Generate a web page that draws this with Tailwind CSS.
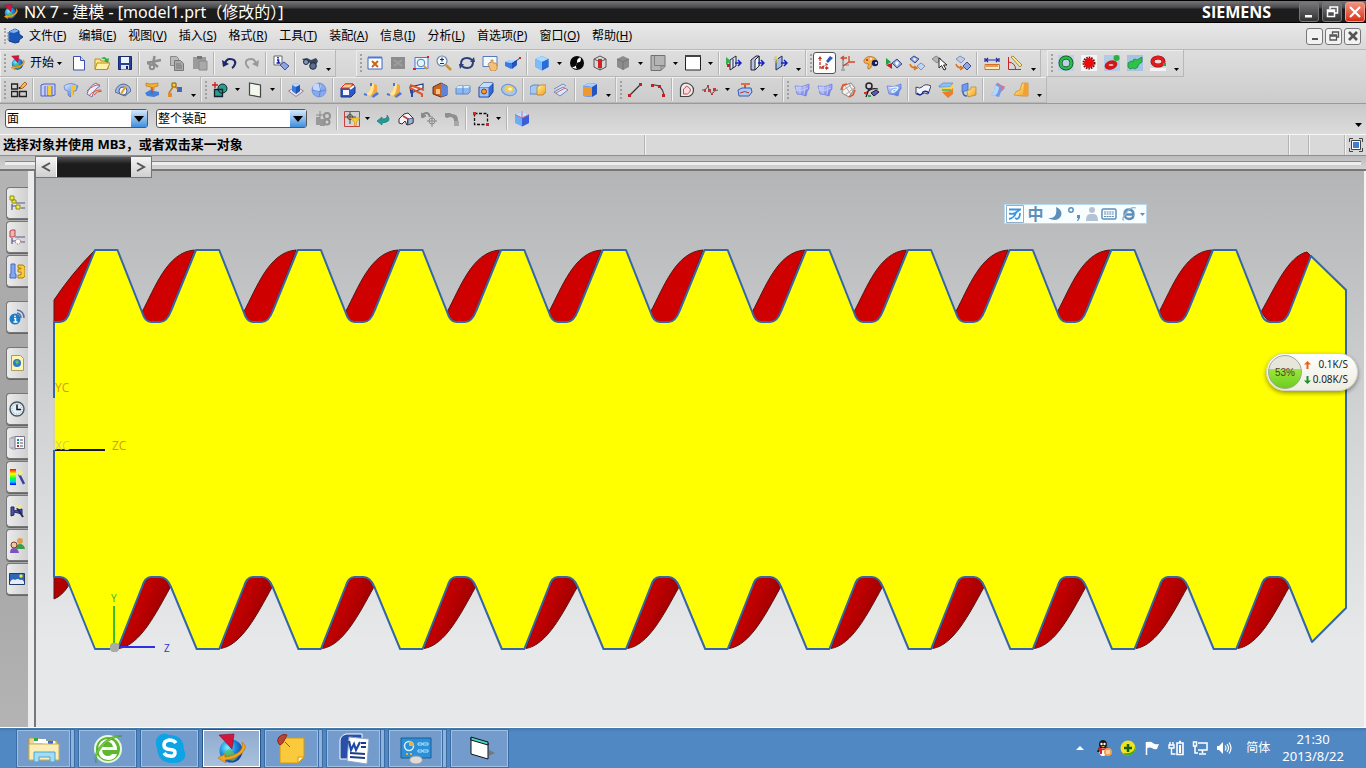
<!DOCTYPE html>
<html lang="zh-CN">
<head>
    <meta charset="UTF-8">
    <meta name="viewport" content="width=device-width, initial-scale=1.0">
    <title>NX 7 - 建模 - [model1.prt]</title>

    <!-- Tailwind CSS CDN -->
    <script src="https://cdn.jsdelivr.net/npm/@tailwindcss/browser@4"></script>
</head>
<body class="h-screen overflow-hidden flex flex-col bg-[#d8d8d8] text-black text-[12px] leading-4 font-['Noto_Sans','Noto_Sans_CJK_SC',sans-serif]">

    <!-- Shared gradients -->
    <svg class="absolute w-0 h-0" aria-hidden="true">
        <defs>
            <linearGradient id="blue" x1="0" y1="0" x2="1" y2="1"><stop offset="0" stop-color="#e4f0ff"/><stop offset="1" stop-color="#2c6ad8"/></linearGradient>
            <linearGradient id="gold" x1="0" y1="0" x2="1" y2="1"><stop offset="0" stop-color="#fff2a0"/><stop offset="1" stop-color="#f39a1c"/></linearGradient>
            <linearGradient id="violet" x1="0" y1="0" x2="1" y2="1"><stop offset="0" stop-color="#f0f2ff"/><stop offset="1" stop-color="#5464dc"/></linearGradient>
            <linearGradient id="rainbow" x1="0" y1="0" x2="0" y2="1"><stop offset="0" stop-color="#f00"/><stop offset=".3" stop-color="#ff0"/><stop offset=".6" stop-color="#0f4"/><stop offset=".8" stop-color="#0cf"/><stop offset="1" stop-color="#00f"/></linearGradient>
            <radialGradient id="globe" cx=".35" cy=".35" r=".7"><stop offset="0" stop-color="#7df0ff"/><stop offset=".5" stop-color="#1c8fe0"/><stop offset="1" stop-color="#123a9c"/></radialGradient>
            <symbol id="nx" viewBox="0 0 32 32">
                <circle cx="15" cy="18" r="11.500" fill="url(#globe)"/>
                <path d="M8 20q5-6 9-1t6 1q-1 6-6 8-6-1-9-8z" fill="#5ec54a" opacity=".7"/>
                <path d="M26 9q6 4 1 10-6 7-18 8l1 3-8-5 7-4 0 3q10-1 15-6 4-5 2-9z" fill="#f3a51e" stroke="#b86c08" stroke-width=".6"/>
                <path d="M3 2l15-1-2 15z" fill="#d3163c" stroke="#8c0a24" stroke-width=".6"/>
            </symbol>
        </defs>
    </svg>

    <!-- Title bar -->
    <header class="h-[23px] shrink-0 flex items-center pl-[3px] border-t border-b border-black bg-linear-to-b from-[#77777b] from-0% via-[#4a4a4c] via-30% to-[#1c1c1c] to-40% text-white">
        <svg class="w-4 h-4"><use href="#nx"/></svg>
        <h1 class="ml-[5px] text-[16px] leading-5 whitespace-pre">NX 7 - 建模 - [model1.prt（修改的）]</h1>
        <span class="ml-auto mr-7 text-[16px] font-bold font-['Open_Sans','Noto_Sans',sans-serif]">SIEMENS</span>
        <div class="flex gap-[3px] pr-[1px]">
            <button aria-label="最小化" class="w-5 h-5 grid place-items-center rounded-[3px] border border-[#777] bg-linear-to-b from-[#77777a] to-[#333]"><svg viewBox="0 0 16 16" class="w-4 h-4"><path d="M4 11h7v2.500H4z" fill="#fff"/></svg></button>
            <button aria-label="还原" class="w-5 h-5 grid place-items-center rounded-[3px] border border-[#777] bg-linear-to-b from-[#77777a] to-[#333]"><svg viewBox="0 0 16 16" class="w-4 h-4"><path d="M6 5V3h7.500v6H11M3.500 6h7v6.500h-7zM3.500 7.500h7" fill="none" stroke="#fff" stroke-width="1.500"/></svg></button>
            <button aria-label="关闭" class="w-5 h-5 grid place-items-center rounded-[3px] border border-[#f0a090] bg-linear-to-b from-[#f0907c] to-[#d8280c]"><svg viewBox="0 0 16 16" class="w-4 h-4"><path d="M3 3l10 10M13 3L3 13" stroke="#fff" stroke-width="2.200"/></svg></button>
        </div>
    </header>

    <!-- Menu bar -->
    <nav class="h-[27px] shrink-0 flex items-center border-b border-[#b9b9b9] bg-linear-to-b from-[#e8e8e8] to-[#d9d9d9]">
        <span class="ml-1 mr-px h-4 border-l-2 border-dotted border-[#a8a8a8]"></span>
        <svg class="w-4 h-4" viewBox="0 0 16 16"><path d="M2 4l6-3 4 2v3l4 3-4 3v2l-4 1-6-2z" fill="#1c56b8" stroke="#123c84"/><path d="M2 4l6-3 4 2-5 2z" fill="#7cb4f4"/><path d="M0 5h3M0 8h3M0 11h3" stroke="#5b8ad0"/></svg>
        <div id="menu" class="flex gap-3 ml-[6px]"></div>
        <div class="ml-auto flex gap-[2px] pr-[5px]">
            <button aria-label="最小化窗口" class="w-[17px] h-[17px] grid place-items-center rounded-[3px] border border-[#777] bg-[#f2f2f2]"><svg viewBox="0 0 12 12" class="w-3 h-3"><path d="M3 8h6v2H3z" fill="#555"/></svg></button>
            <button aria-label="还原窗口" class="w-[17px] h-[17px] grid place-items-center rounded-[3px] border border-[#777] bg-[#f2f2f2]"><svg viewBox="0 0 12 12" class="w-3 h-3"><path d="M4.500 4V2h6v5H9M2 5h6.500v5H2zM2 6h6" fill="none" stroke="#555" stroke-width="1.300"/></svg></button>
            <button aria-label="关闭窗口" class="w-[17px] h-[17px] grid place-items-center rounded-[3px] border border-[#777] bg-[#f2f2f2]"><svg viewBox="0 0 12 12" class="w-3 h-3"><path d="M2 2l8 8M10 2l-8 8" stroke="#555" stroke-width="2.600"/></svg></button>
        </div>
    </nav>

    <!-- Toolbars, filled in by the script -->
    <div id="toolbars" class="shrink-0 bg-linear-to-b from-[#dedede] to-[#cccccc] border-b border-[#999]"></div>

    <!-- Selection bar -->
    <div class="h-[30px] shrink-0 flex items-center pl-[5px] pr-1 pb-px bg-linear-to-b from-[#c9c9c9] to-[#dcdcdc]">
        <div class="relative w-[143px]">
            <select aria-label="类型过滤器" class="appearance-none block w-full h-[19px] pl-px rounded-[3px] border border-[#555] bg-white text-[12px] leading-4"><option>面</option></select>
            <span class="pointer-events-none absolute inset-y-px right-px w-4 grid place-items-center bg-linear-to-b from-[#d4e8fb] to-[#3f8fdc]"><svg class="w-3 h-2" viewBox="0 0 12 8"><path d="M1 1h10L6 7z"/></svg></span>
        </div>
        <div class="relative w-[151px] ml-2">
            <select aria-label="选择范围" class="appearance-none block w-full h-[19px] pl-px rounded-[3px] border border-[#555] bg-white text-[12px] leading-4"><option>整个装配</option></select>
            <span class="pointer-events-none absolute inset-y-px right-px w-4 grid place-items-center bg-linear-to-b from-[#d4e8fb] to-[#3f8fdc]"><svg class="w-3 h-2" viewBox="0 0 12 8"><path d="M1 1h10L6 7z"/></svg></span>
        </div>
        <div id="selection-tools" class="flex items-center ml-1"></div>
        <button aria-label="选项" class="ml-auto mt-3"><svg class="w-[7px] h-1" viewBox="0 0 7 4"><path d="M0 0h7L3.500 4z"/></svg></button>
    </div>

    <!-- Prompt line -->
    <div class="h-[22px] shrink-0 flex border-t border-b border-t-[#f6f6f6] border-b-[#8f8f8f] bg-[#d9d9d9]">
        <p class="flex-1 pl-[3px] text-[13px] font-bold leading-[19px] whitespace-nowrap">选择对象并使用 MB3，或者双击某一对象</p>
        <span class="w-[644px] border-l border-[#b5b5b5] shadow-[inset_1px_0_#f2f2f2]"></span>
        <span class="w-5 border-l border-[#b5b5b5] shadow-[inset_1px_0_#f2f2f2]"></span>
        <span class="w-9 border-l border-[#b5b5b5] shadow-[inset_1px_0_#f2f2f2]"></span>
        <button aria-label="全屏" class="w-[22px] grid place-items-center border-l border-[#b5b5b5] shadow-[inset_1px_0_#f2f2f2]"><svg class="w-[14px] h-[14px]" viewBox="0 0 14 14"><path d="M.5 4V.5H4M10 .5h3.500V4M.5 10v3.500H4M10 13.500h3.500V10" fill="none" stroke="#444"/><path d="M2.500 2.500h9v9h-9z" fill="#fff" stroke="#444"/><path d="M4 4h6v6H4z" fill="#3d7fd0"/></svg></button>
    </div>

    <!-- Dock track with the small scroller hanging over the canvas -->
    <div class="relative h-[15px] shrink-0 py-[5px] px-[5px] bg-linear-to-b from-[#bcbcbc] to-[#d4d4d4] border-b-2 border-[#777]">
        <div class="h-1 border-t border-[#888] bg-[#ededed]"></div>
        <div class="absolute z-10 left-[35px] top-0 w-[117px] h-[22px] flex border border-[#777] bg-[#1c1c1c]">
            <button aria-label="向左" class="w-[21px] grid place-items-center bg-linear-to-b from-[#f4f4f4] to-[#cfcfcf] border-r border-white"><svg class="w-3 h-3" viewBox="0 0 12 12"><path d="M10 2L3 6l7 4" fill="none" stroke="#555" stroke-width="2"/></svg></button>
            <span class="flex-1 bg-linear-to-b from-[#55565a] to-[#1c1c1c] to-35%"></span>
            <button aria-label="向右" class="w-5 grid place-items-center bg-linear-to-b from-[#f4f4f4] to-[#cfcfcf]"><svg class="w-3 h-3" viewBox="0 0 12 12"><path d="M2 2l7 4-7 4" fill="none" stroke="#555" stroke-width="2"/></svg></button>
        </div>
    </div>

    <main class="flex-1 min-h-0 flex">
        <!-- Resource bar -->
        <aside id="resources" class="w-7 shrink-0 flex flex-col items-end gap-[2px] pt-4 bg-linear-to-b from-[#b4b4b4] via-[#9f9f9f] to-[#b4b4b4]"></aside>
        <div class="w-2 shrink-0 bg-[#ececec] border-r-2 border-[#777]"></div>

        <!-- Graphics window -->
        <section class="relative flex-1 min-w-0 border-r-2 border-[#f4f4f4] bg-linear-to-b from-[#b4b5b6] from-0% via-[#d2d3d5] via-45% to-[#e6e8ea] to-85%">
            <svg class="block w-full h-full" viewBox="36 171 1328 556" preserveAspectRatio="xMinYMin meet">
                <defs>
                    <linearGradient id="shade" x1="0" y1="0" x2="1" y2=".6"><stop offset="0" stop-color="#8c0000"/><stop offset=".45" stop-color="#c40000"/><stop offset="1" stop-color="#900000"/></linearGradient>
                    <path id="groove-top" d="M142 312C155 288 167 252 194.500 250L171 310Q167 322 160 322H150Q144 320 142 312z" fill="#cf0000" stroke="#5a1414" stroke-width="1"/>
                    <path id="groove-bottom" d="M119 648.500C140 645 155 615 170.500 587Q167 577 161 577H150Q144 580 142 587z" fill="url(#shade)" stroke="#5a1414" stroke-width="1"/>
                </defs>
                <path d="M54 322V300Q72 273 94 251L70 310Q66 322 60 322z" fill="#cf0000" stroke="#5a1414"/>
                <path d="M54 577h8q5 2 7 8-7 11-15 14z" fill="#b00000" stroke="#5a1414"/>
                <g id="grooves"></g>
                <path d="M1261 312C1275 288 1288 256 1307 252L1311 256L1290 310Q1286 322 1279 322H1269z" fill="#cf0000" stroke="#5a1414"/>
                <path id="thread" fill="#ffff00" stroke="#3566a8" stroke-width="2" stroke-linejoin="round"/>
                <path d="M54 398v52" stroke="#d8d49a" stroke-width="2"/>
                <path d="M55 450h50" stroke="#15153c" stroke-width="2"/>
                <g font-family="Open Sans, sans-serif" font-size="12">
                    <text x="55" y="392" fill="#cf9a20">YC</text>
                    <text x="55" y="450" fill="#d2cc70">XC</text>
                    <text x="112" y="450" fill="#cf9a20">ZC</text>
                    <text x="111" y="602" font-size="10" fill="#2db52d">Y</text>
                    <text x="164" y="652" font-size="10" fill="#3a2fd0">Z</text>
                </g>
                <path d="M114 606v38" stroke="#38c01c" stroke-width="2"/>
                <path d="M118 647h37" stroke="#3030e0" stroke-width="2"/>
                <path d="M112 643h5l2 2v5l-2 2h-5l-2-2v-5z" fill="#ababab"/>
            </svg>

            <!-- Input method bar -->
            <div class="absolute top-[33px] right-[217px] h-5 w-[143px] flex items-center justify-between px-px bg-[#f8fdff] border border-[#b8d8ee] text-[#5f8fb8]">
                <svg class="w-[18px] h-[18px]" viewBox="0 0 18 18"><path d="M.5.500h17v17H.5z" fill="#fff" stroke="#8fb0cc"/><path d="M3 4.500h12M3 8.500q5 1 7-1l4-3M3 14q5-1 7-6M14 8q0 5-3 6l-2-1" fill="none" stroke="#3d96e0" stroke-width="1.800"/></svg>
                <span class="w-4 text-center text-[16px] leading-4 font-bold">中</span>
                <svg class="w-4 h-4" viewBox="0 0 16 16"><path d="M9 1q7 3 5 9-4 7-13 2 10 1 8-11z" fill="currentColor"/></svg>
                <svg class="w-4 h-4" viewBox="0 0 16 16"><circle cx="5" cy="4" r="2.200" fill="none" stroke="currentColor" stroke-width="1.500"/><path d="M11 9h3v3l-2 3h-1l1-3h-1z" fill="currentColor"/></svg>
                <svg class="w-3 h-4" viewBox="0 0 12 16"><circle cx="6" cy="4" r="3" fill="#b4c3d4"/><path d="M0 15q0-7 4-7h4q4 0 4 7z" fill="#b4c3d4"/></svg>
                <svg class="w-4 h-4" viewBox="0 0 16 16"><rect x="1" y="3" width="14" height="10" rx="1.500" fill="none" stroke="currentColor" stroke-width="1.500"/><path d="M3 6h10M3 8h10M3 10.500h10" stroke="currentColor" stroke-dasharray="2 .6"/></svg>
                <svg class="w-4 h-4" viewBox="0 0 16 16"><path d="M12.500 10q-1 3-4.500 3-4.500-.5-4.500-5T8 3.500q4.500.5 4.500 5H5" fill="none" stroke="currentColor" stroke-width="2.400"/><path d="M3 14Q0 14 5 7t10-5" fill="none" stroke="#8fb4d4" stroke-width="1.300"/></svg>
                <svg class="w-[5px] h-[3px]" viewBox="0 0 5 3"><path d="M0 0h5L2.500 3z" fill="currentColor"/></svg>
            </div>

            <!-- Network speed bubble -->
            <div class="absolute top-[182px] right-[6px] w-[92px] h-[38px] flex items-center gap-[2px] pl-px pr-[9px] rounded-full bg-linear-to-b from-white to-[#ededdf] border border-[#d2d2c4] shadow-[0_2px_4px_#0006] text-[10px] leading-[15px] text-[#222]">
                <div class="w-[34px] h-[34px] shrink-0 grid place-items-center rounded-full border border-[#a0a890] bg-linear-to-b from-[#e6e6da] from-40% via-[#9be83c] via-41% to-[#6ccc1c] text-[#5a3a1a] font-['Liberation_Sans']">53%</div>
                <div class="flex-1 whitespace-nowrap">
                    <div class="flex items-center justify-between"><svg class="w-[7px] h-2" viewBox="0 0 7 8"><path d="M3.500 0L7 3.500H4.500V8h-2V3.500H0z" fill="#e8641c"/></svg>0.1K/S</div>
                    <div class="flex items-center justify-between"><svg class="w-[7px] h-2" viewBox="0 0 7 8"><path d="M3.500 8L7 4.500H4.500V0h-2v4.500H0z" fill="#1f8f2f"/></svg>0.08K/S</div>
                </div>
            </div>
        </section>
    </main>

    <!-- Taskbar -->
    <footer class="h-[41px] shrink-0 flex items-stretch border-t border-white bg-linear-to-b from-[#4478ae] to-[#5088c4] to-10% text-white">
        <div id="tasks" class="flex gap-[3px] pl-4"></div>
        <div class="ml-auto flex items-center gap-2 pr-[22px]">
            <svg class="w-4 h-4" viewBox="0 0 16 16"><path d="M4 10h8L8 6z" fill="#fff"/></svg>
            <svg class="w-4 h-4" viewBox="0 0 16 16"><ellipse cx="7" cy="4.500" rx="4" ry="4.500" fill="#181818"/><path d="M3 7q4 3 8 0l3 5H1z" fill="#181818"/><ellipse cx="7" cy="12" rx="3.500" ry="4" fill="#fff"/><path d="M3 7q4 3 8 0v2q-4 2-5 1v4H4v-4H2z" fill="#e02020"/><circle cx="5.500" cy="4" r="1.200" fill="#fff"/><circle cx="8.500" cy="4" r="1.200" fill="#fff"/><path d="M5 6h4l-2 1.500z" fill="#f5a81c"/><circle cx="12" cy="12" r="4" fill="#f0a04c"/><path d="M10 11h4M10 13h4" stroke="#fff"/></svg>
            <svg class="w-4 h-4" viewBox="0 0 16 16"><circle cx="8" cy="8" r="7.500" fill="#f2e31c"/><path d="M3 13Q16 15 15 4q2 9-5 11.500Q5 16 3 13z" fill="#3fa72c"/><path d="M8 4v8M4 8h8" stroke="#146014" stroke-width="2.500"/></svg>
            <svg class="w-4 h-4" viewBox="0 0 16 16"><path d="M2.500 2v13" stroke="#fff" stroke-width="1.500"/><path d="M3 2q4-1 6 1 2 2 6 1l-2 5q-3 1-5-1-2-1-5 0z" fill="#fff"/></svg>
            <svg class="w-4 h-4" viewBox="0 0 16 16"><path d="M2 2v3M5 2v3M1 5h5v3H1zM3.500 8v6h4" fill="none" stroke="#fff" stroke-width="1.400"/><path d="M9 3h6v11.500H9zM11 1.500h2" fill="none" stroke="#fff" stroke-width="1.600"/><path d="M11 5h2v8h-2z" fill="#fff"/></svg>
            <svg class="w-4 h-4" viewBox="0 0 16 16"><path d="M6 3h9v7H6M10.500 10v3M7 14h7M1.500 2h3v4h-3zM3 6v7h3" fill="none" stroke="#fff" stroke-width="1.500"/></svg>
            <svg class="w-4 h-4" viewBox="0 0 16 16"><path d="M1 6h2l4-4v12l-4-4H1z" fill="#fff"/><path d="M9 5.500q2 2.500 0 5M11 4q3 4 0 8M13 2.500q4 5.500 0 11" fill="none" stroke="#fff" stroke-width="1.200"/></svg>
            <span class="ml-[6px] w-6">简体</span>
            <div class="ml-1 text-center text-[13px] leading-[17px]"><div>21:30</div><div>2013/8/22</div></div>
        </div>
    </footer>

    <script>
        // --- Icon artwork, all on a 16 x 16 grid ---
        const icons = {
            new: `<path d="M2.500 1.500h7l4 4v9.500h-11z" fill="#fff" stroke="#3a4fb0"/><path d="M9.500 1.500v4h4" fill="#cfdcff" stroke="#3a4fb0"/>`,
            open: `<path d="M1 4h5l1 2h7v8H1z" fill="#ffe680" stroke="#b8901c"/><path d="M3 8h13l-3 6.500H1z" fill="#fff2a8" stroke="#b8901c"/><path d="M7 4q3-4 6 0l2-1-1 5-4-2 1.500-1Q10 3 7 4z" fill="#2fae3f"/>`,
            save: `<path d="M1.500 1.500h13v13h-13z" fill="#2a3f98" stroke="#182868"/><path d="M4 2h8v6H4z" fill="#e8f4ff"/><path d="M4 10h8v4.500H4z" fill="#dfe6f0"/><path d="M9 11h2v3H9z" fill="#182868"/>`,
            cut: `<path d="M8.500 1L7 9M1 8l14-3M7 8l5 4" fill="none" stroke="#8d8d8d" stroke-width="2.500"/><circle cx="6" cy="12" r="2.200" fill="none" stroke="#8d8d8d" stroke-width="2"/><circle cx="3" cy="8" r="2" fill="#8d8d8d"/>`,
            copy: `<path d="M1.500 1.500h6l2 2v7h-8z" fill="#bbb" stroke="#888"/><path d="M5.500 5.500h6l3 3v7h-9z" fill="#aaa" stroke="#777"/><path d="M7 9h5M7 11h6M7 13h6" stroke="#777"/>`,
            paste: `<path d="M1 2h13v12H1z" fill="#9b9b9b"/><path d="M5 1h5v3H5z" fill="#777"/><path d="M7 6h8v9H7z" fill="#a9a9a9" stroke="#8a8a8a"/>`,
            undo: `<path d="M4 9Q5 4 9 4q6 0 5 5-1 3-3 4" fill="none" stroke="#1c2868" stroke-width="2.200"/><path d="M1 5l1 7 6-3z" fill="#1c2868"/>`,
            redo: `<path d="M12 9Q11 4 7 4 1 4 2 9q1 3 3 4" fill="none" stroke="#999" stroke-width="2"/><path d="M15 5l-1 7-6-3z" fill="#999"/>`,
            info: `<path d="M1 1h8v9H1z" fill="#fff" stroke="#666"/><path d="M5 2v1.500M4 5h1.500v3M3.500 8h4" stroke="#1020a0" stroke-width="1.600" fill="none"/><path d="M7 10l4-3 5 4-4 4z" fill="#8ea4dc" stroke="#3c50a0"/>`,
            find: `<path d="M0 4l5-1 4 2 5-2 2 3-2 4-4 2-3-5-3 1z" fill="#39465c"/><circle cx="11" cy="11" r="3.300" fill="#5b6f90" stroke="#1c2840"/><circle cx="4" cy="7" r="2.500" fill="#8496b4" stroke="#1c2840"/>`,
            fit: `<path d="M1 2.500h14v11.500H1z" fill="#fff" stroke="#3a66c0"/><path d="M1 1.500h14v2H1z" fill="#4a7ad8"/><path d="M5 6l6 6M11 6l-6 6" stroke="#d0601c" stroke-width="2"/>`,
            fitGray: `<path d="M1 2h14v12H1z" fill="#8c8c8c"/><path d="M4 5l8 6M12 5l-8 6" stroke="#9d9d9d" stroke-width="2"/>`,
            zoomBox: `<path d="M2 2.500h13v11H2z" fill="#e8f4ff" stroke="#4a7ad8"/><circle cx="8" cy="8" r="3.800" fill="#dff6ff" stroke="#5878a8"/><path d="M11 11l3 3" stroke="#d89a30" stroke-width="2"/><path d="M14 1h2v2h-2zM0 13h3v2H0z" fill="#e02020"/>`,
            zoom: `<circle cx="6" cy="6" r="5" fill="#f0faff" stroke="#7088a8" stroke-width="1.200"/><path d="M6 2.500v4M4 4.500h4M4 8.500h4" stroke="#1c2c8c" stroke-width="1.200"/><path d="M10 10l5 5" stroke="#c8923c" stroke-width="2.500"/>`,
            rotate: `<path d="M2 9q0-6 6-6 3 0 5 2M14 7q0 6-6 6-3 0-5-2" fill="none" stroke="#2c3f78" stroke-width="2"/><path d="M11 7h5l-1-5zM0 9h5l-4 5z" fill="#2c3f78"/>`,
            pan: `<path d="M1 1.500h14v10H1z" fill="#f4f8ff" stroke="#5878b8"/><path d="M6 9l2-2 1 1V5h2v3h3l1 3v3l-2 2h-4z" fill="#f3c078" stroke="#b87c30" stroke-width=".7"/>`,
            persp: `<path d="M0 7l5-2h7l-1 6-5 3-6-3z" fill="#3c7ce0"/><path d="M0 7l5-2h7L7 8z" fill="#a8d4ff"/><path d="M7 8l5-3v5l-5 4z" fill="#2458c0"/><path d="M7 9l8-6" stroke="#283c70"/><path d="M14 2h2v2h-2z" fill="#d02020"/>`,
            cube: `<path d="M8 1l6.500 3v8L8 15.500 1.500 12V4z" fill="#3f8ae8"/><path d="M8 1l6.500 3L8 7 1.500 4z" fill="#a8dcff"/><path d="M8 7l6.500-3v8L8 15.500z" fill="#2c6ad8"/><path d="M1.500 4L8 7v8.500L1.500 12z" fill="#7cbcf8"/>`,
            yin: `<circle cx="8" cy="8" r="7" fill="#080808"/><path d="M8 1q6 1 3 6-4 0-4 4 0 4 4 3Q5 14 3 12q5 0 5-5 0-4 3-4-1-2-3-2z" fill="#fff"/>`,
            section: `<path d="M8 1l6 3v8l-6 3-6-3V4zM2 4l6 3 6-3M8 7v8" fill="#d8d8d8" stroke="#555"/><path d="M6 4h4v9H6z" fill="#d42020"/>`,
            sectionGray: `<path d="M8 1l6 3v8l-6 3-6-3V4z" fill="#8c8c8c"/><path d="M2 4l6 3 6-3M8 7v8" fill="none" stroke="#757575"/>`,
            layer: `<path d="M1 .5h14v11l-4 4H1z" fill="#b4b4b4" stroke="#707070"/><path d="M4.500 1v9.500H15M11 15v-4h4" fill="none" stroke="#808080"/>`,
            white: `<path d="M.5 1h15v14H.5z" fill="#fff" stroke="#222"/><path d="M0 0h16v2H0z" fill="#444"/>`,
            wcs1: `<path d="M4 5l6-4v10l-6 4z" fill="#dfe8fc" stroke="#223"/><path d="M7 4v9" stroke="#223"/><path d="M9 8h6M12 5l3 3-3 3" stroke="#1420c8" stroke-width="1.500" fill="none"/><path d="M0 2l5 4-5 4z" fill="#2fb04a"/><path d="M1 9h3v3H1z" fill="#c82020"/>`,
            wcs2: `<path d="M2 5l5-4h3v10l-4 4H2z" fill="#b8c4dc" stroke="#223"/><path d="M6 5l4-4v10l-4 4z" fill="#eef3ff" stroke="#223"/><path d="M9 8h6M12 5l3 3-3 3" stroke="#1420c8" stroke-width="1.500" fill="none"/>`,
            wcs3: `<path d="M4 5l6-4v10l-6 4z" fill="#a8bce4" stroke="#1c2c58"/><path d="M9 8h6M12 5l3 3-3 3" stroke="#1420c8" stroke-width="1.500" fill="none"/><path d="M4 1v7M1 4.500h7M2 2l5 5M7 2L2 7" stroke="#e8c81c"/>`,
            csys: `<path d="M3 3v10l6-3M4 13h6" fill="none" stroke="#c03020" stroke-width="1.300" stroke-dasharray="3 1"/><path d="M1 4h4L3 1zM9 11v4l3-2zM8 8l3 1-1 2z" fill="#c03020"/><path d="M9 6l4-5 3 2-5 5z" fill="#2c58b8"/>`,
            csys2: `<path d="M3 5v9M3 10h6M1 15h4" fill="none" stroke="#999" stroke-width="1.600"/><path d="M9 1v6h6M9 7l-6 4M1 3h6M4 1l-3 2 3 2" fill="none" stroke="#d04828" stroke-width="1.300"/>`,
            palette: `<path d="M1 5q3-5 9-3 5 2 3 5-2 1-4 1 0 6-4 6-1-2 1-5-6 0-5-4z" fill="#f3b04c" stroke="#a86c18" stroke-width=".7"/><circle cx="4" cy="5" r="1" fill="#c02020"/><circle cx="8" cy="4" r="1" fill="#fff"/><circle cx="12" cy="8" r="3.200" fill="#182060"/><circle cx="13" cy="8" r="1" fill="#fff"/>`,
            arrowDia: `<path d="M0 3l5 4-5 3z" fill="#1fa040"/><path d="M0 10l6-2v6z" fill="#c82020"/><path d="M6 8l5-4 5 5-5 4z" fill="#90a8e4" stroke="#3c4c90"/><path d="M9 8l2-2 2 2-2 3z" fill="#fff"/>`,
            diamonds: `<path d="M1 4l4-3 5 3-4 4z" fill="#90a8e4" stroke="#3c4c90"/><path d="M4 4l1-1 2 1-1 2z" fill="#fff"/><path d="M8 11l4-3 4 3-4 4z" fill="#c4d4f4" stroke="#8090b8"/><path d="M1 9q1 4 6 4M5 11l3 2-3 2" fill="none" stroke="#d8741c" stroke-width="1.500"/>`,
            pick: `<path d="M0 4l4-3 5 3-4 4z" fill="#b4b4b4" stroke="#888"/><path d="M7 3v10l2.500-2.500L12 15l2-1-2.500-4H15z" fill="#fff" stroke="#222"/>`,
            diamonds2: `<path d="M1 4l4-3 5 3-4 4z" fill="#c0ccec" stroke="#8090b8"/><path d="M8 11l4-4 4 4-4 4z" fill="#90a8e4" stroke="#3c4c90"/><path d="M1 9q1 4 6 4M5 11l3 2-3 2" fill="none" stroke="#d8741c" stroke-width="1.500"/>`,
            ruler: `<path d="M1 3v4M15 3v4M2 5h12M4 3L2 5l2 2M12 3l2 2-2 2" fill="none" stroke="#1c2c9c" stroke-width="1.200"/><path d="M1 9.500h14.500v5H1z" fill="#fff0b0" stroke="#d07020"/><path d="M3 10v2M5 10v2M7 10v2M9 10v2M11 10v2M13 10v2" stroke="#d04020"/>`,
            angle: `<path d="M1.500 2v12.500H14M1.500 7q7 1 7 7" fill="none" stroke="#c02828"/><path d="M4 2l2-1 9 9-2 2z" fill="#f8e89c" stroke="#a88c28"/>`,
            gear1: `<path d="M0 0h16v16H0z" fill="#bcd0ea"/><circle cx="8" cy="8" r="5.500" fill="none" stroke="#123c1c" stroke-width="4"/><circle cx="8" cy="8" r="5.500" fill="none" stroke="#26c048" stroke-width="2.600"/>`,
            gear2: `<path d="M0 0h16v16H0z" fill="#f4f4f4"/><circle cx="8" cy="8" r="5.500" fill="none" stroke="#5c1010" stroke-width="2" stroke-dasharray="1.500 1"/><circle cx="8" cy="8" r="5" fill="#e80c0c"/>`,
            gear3: `<path d="M0 0h16v16H0z" fill="#b4cbe8"/><ellipse cx="7" cy="10" rx="6.500" ry="4.500" fill="#d01818" transform="rotate(-20 7 10)"/><ellipse cx="7" cy="10" rx="2.500" ry="1" fill="#f4b4b4"/><circle cx="12.500" cy="3" r="3" fill="#28b040"/>`,
            gear4: `<path d="M0 0h16v16H0z" fill="#a4c4e4"/><path d="M1 8l3-2 2 1V5l2-1 2 1 5-3v5l-4 3v2l-3 2-2-1-3 1-2-2z" fill="#2cc448" stroke="#1c7c30" stroke-width=".7"/>`,
            gear5: `<path d="M0 13h16v3H0z" fill="#f4f4f4"/><ellipse cx="8" cy="6.500" rx="5.500" ry="4" fill="#f4d8d8" stroke="#7c1010" stroke-width="4"/><ellipse cx="8" cy="6.500" rx="5.500" ry="4" fill="none" stroke="#e41c1c" stroke-width="3"/><path d="M13 8h3v3h-3z" fill="#2ca840"/>`,
            sketch: `<path d="M.5 2h6v5h-6zM.5 9.500h6v5h-6zM8.500 9.500h7v5h-7zM8.500 7V5" fill="none" stroke="#222" stroke-width="1.400"/><path d="M9 7l1-3 4-4 2 2-4 4z" fill="#f4c42c" stroke="#8c3010" stroke-width=".7"/>`,
            extrude: `<path d="M1 3l3-1h11v11l-3 1H1z" fill="#c4ccfa" stroke="#5060c0"/><path d="M5 4v10M8 4v10M12 4v10" stroke="#5060c0"/><path d="M8 3h3v10H8z" fill="#f4cc3c"/>`,
            revolve: `<path d="M1 4q7-5 14 0l-2 5h-3v4l-3 2-2-2V9L2 8z" fill="url(#blue)" stroke="#5a78c0" stroke-width=".7"/><path d="M8 3h5v5l-3 1v5l-2 1z" fill="#f6c438"/>`,
            sweep: `<path d="M1 12q2-8 9-11l4 3q-6 3-8 11z" fill="#e6ecfc" stroke="#7078b0"/><path d="M1 9q7-7 13-6M3 14q4-6 12-6M8 13q3-4 8-4" fill="none" stroke="#d85038"/>`,
            hole: `<path d="M0 10q2-8 9-8 6 1 7 7l-6 5z" fill="#a0b8e0" stroke="#506ca8"/><circle cx="8" cy="9" r="4" fill="#f0f4fc" stroke="#506080"/><path d="M6 12l5-8" stroke="#e0a020" stroke-width="2"/>`,
            datum: `<path d="M2 1l4 1 8-1v3l-4 1v3H7V5L2 4z" fill="#f4b030" stroke="#b87818" stroke-width=".7"/><path d="M1 11l5-3 9 2v3l-5 2-7-1z" fill="#3f80e0"/><path d="M8 5v7" stroke="#c83820"/>`,
            pattern: `<path d="M5 1h4v4H5z" fill="#f4d038" stroke="#806008"/><path d="M10 5h5v5h-5z" fill="#3c68c8"/><path d="M1 11h4v4H1z" fill="#f08820"/><path d="M2 11l4-6M8 5l3 2" fill="none" stroke="#c87818" stroke-width="1.500"/>`,
            unite: `<path d="M3 0v6M0 3h6" stroke="#d01818" stroke-width="1.300"/><circle cx="10.500" cy="6.500" r="4.500" fill="#2c9c84" stroke="#123"/><path d="M2.500 7.500h8v7h-8z" fill="#2c9c84" stroke="#123" stroke-width="1.300"/><path d="M6 7.500q1 4 4.500 4" fill="none" stroke="#123"/>`,
            plane: `<path d="M2.500 1l11 2v12l-11-2z" fill="#f2f8ee" stroke="#444" stroke-width="1.200"/>`,
            block: `<path d="M.5 9l7.500 5.500L15.500 9 12 7H4z" fill="#e0e8fa" stroke="#a07c90"/><path d="M4 3l4-2 4 2v6l-4 3-4-3z" fill="#3c78dc"/><path d="M4 3l4-2 4 2-4 2z" fill="#bcdcff"/><path d="M8 5v7l4-3V3z" fill="#2454b4"/>`,
            sphere: `<circle cx="8" cy="8" r="7" fill="#86aaf0" stroke="#6a90d4" stroke-width=".8"/><circle cx="6" cy="5.500" r="4" fill="#c4d8ff"/><path d="M1 8q7 3 14 0M8 1q3 7 0 14" fill="none" stroke="#5c80d0" stroke-width=".8"/>`,
            blend: `<path d="M1 6l4-4h8l2 3v6l-4 4H1z" fill="#2c58c8" stroke="#1c3480"/><path d="M1 6l4-4h8l-3 4z" fill="#ffd080" stroke="#e03818"/><path d="M3 8h6v5H3z" fill="#f4f6ff"/><path d="M10 7l4-3" stroke="#fff" stroke-width="2"/>`,
            chamfer: `<path d="M8 1l6 2v8l-5 4-8-3q7 0 7-11z" fill="#f4a838"/><path d="M8 1l3 1q0 9-4 12l-6-2q7 0 7-11z" fill="#ffe49c"/><path d="M8 1v3M1 12l3 1" stroke="#4878d8" stroke-width="2"/><path d="M14 10l2 2-6 4-1-2z" fill="#4878d8"/>`,
            trim: `<path d="M1 5l13-3v4L2 11z" fill="#f4f4ff" stroke="#1c3480" stroke-width="1.200"/><path d="M1 3l14 5M1 6l12 6v3" stroke="#e05828" stroke-width="2" fill="none"/><path d="M3 8v7" stroke="#2848b0" stroke-width="2"/>`,
            shell: `<path d="M1 5l8-4 6 3v9l-6 2-8-3z" fill="#c86424" stroke="#6c2c10"/><path d="M9 1l6 3v9l-6 2z" fill="#5c84d8"/><path d="M4 7h4v5H4z" fill="#f6c47c"/>`,
            tube: `<path d="M1 6l2-2h12v6l-2 2H1z" fill="#8cb8f0" stroke="#5c88c8"/><path d="M1 6l2-2h12l-2 2z" fill="#d8ecff"/><path d="M8 4v8" stroke="#5c88c8"/>`,
            boss: `<path d="M1 5l4-4h10v9l-4 5H1z" fill="#2f6cd8" stroke="#1c3c90"/><path d="M1 5l4-4h10l-4 4z" fill="#c4dcff"/><path d="M1.500 5.500h9v9h-9z" fill="#9cc4fa"/><circle cx="6" cy="9.500" r="2.500" fill="#f0a020" stroke="#a83010"/>`,
            pad: `<ellipse cx="8" cy="8" rx="7.500" ry="5.500" fill="#a4c4f4" stroke="#6890d0" transform="rotate(15 8 8)"/><ellipse cx="8" cy="7" rx="4.500" ry="3.500" fill="#f4cc50"/><ellipse cx="9" cy="7" rx="2" ry="1.500" fill="#fff4c8"/>`,
            join: `<path d="M0 5l3-2h6v9H0z" fill="#a4c8f4" stroke="#5c88c8"/><path d="M7 5l3-2h6v7l-3 3H7z" fill="url(#gold)" stroke="#c08c30"/>`,
            sheet: `<path d="M1 10l9-5 5 3-8 6zM1 7l9-5 3 2" fill="#dce6fa" stroke="#7088c0"/><path d="M3 11l9-5" stroke="#d06868"/>`,
            grid: `<path d="M1 4l6-3 8 1v10l-5 3-9-1z" fill="#2454c4"/><path d="M1 4l6-3 8 1-5 3z" fill="#a8d0ff"/><path d="M1 4l9 1v10l-9-1z" fill="#7cacf4"/><path d="M2 6h3v3H2zM6 6h3v3H6zM2 10h3v3H2zM6 10h3v3H6z" fill="#f09830"/>`,
            line: `<path d="M2.500 13.500l11-11" stroke="#333" stroke-width="1.300"/><path d="M1 12h3v3H1zM12 1h3v3h-3z" fill="#c02020"/>`,
            arc: `<path d="M2 3q10-1 12 10" fill="none" stroke="#444" stroke-width="1.300"/><path d="M1 2h3v3H1zM8 3h3v3H8zM12 12h3v3h-3z" fill="#c02020"/>`,
            offset: `<path d="M1.500 14.500V6q1-5 6-5 7 2 7 7t-5 6.500z" fill="#ececec" stroke="#444" stroke-width="1.200"/><path d="M4.500 12V7q1 0 3-3 4 2 4 4t-3 4z" fill="#fbdcdc" stroke="#d04858"/>`,
            spline: `<path d="M0 8h2q3-1 4-4 2 9 5 7 1-3 5-3" fill="none" stroke="#555"/><path d="M2 7h2v3H2zM6 7h3v3H6zM11 6h3v3h-3zM5 3h2v2H5zM9 11h2v2H9z" fill="#c83838"/>`,
            project: `<path d="M8 3v5" stroke="#d02828" stroke-width="1.500"/><path d="M4 1h9v2H4z" fill="#e07040"/><path d="M1 8l4-2h9l1 4-3 4H2z" fill="#a8ccf4" stroke="#3c58b0"/><path d="M3 11q5-3 9 0" fill="none" stroke="#d02828"/>`,
            surf: `<path d="M1 4q7 2 14-2v5q-2 1-3 7-5-2-9-2z" fill="url(#violet)" stroke="#6c78e0" stroke-width=".7"/><path d="M6 4v8M11 4l-1 9M1 8q7 2 13-2" fill="none" stroke="#c4ccff"/>`,
            mesh: `<path d="M3 4l8-3 4 5-6 9-7-4z" fill="#f8f0ea" stroke="#888"/><path d="M5 4l6 8M9 2l4 7M2 9l9-6M5 13l9-7" stroke="#aaa"/><path d="M1 8l2-5 4-1M15 8l-2 5-4 2" fill="none" stroke="#e05828" stroke-width="1.700"/>`,
            through: `<circle cx="6" cy="4" r="3" fill="#dcd" stroke="#222" stroke-width="1.500"/><path d="M2 12q6-7 13-5M6 7l-3 8" fill="none" stroke="#222" stroke-width="1.300"/><path d="M8 11l5-3 3 2-5 4z" fill="#5c58c0" stroke="#223"/><path d="M1 10h3v2H1z" fill="#d03030"/><path d="M5 13h3v2H5z" fill="#2ca848"/>`,
            nsurf: `<path d="M1 4q7 2 14-2v5q-2 1-3 7-5-2-9-2z" fill="url(#blue)" stroke="#6c78e0" stroke-width=".8"/><path d="M4 6q7-2 8 0-3 5-6 4 0-3 6-3" fill="none" stroke="#fff" stroke-width="1.200"/>`,
            wave: `<path d="M1 5q4 2 6 0 3-4 9-1l-3 8q-4-2-6 0t-6 0z" fill="#f0f4fa" stroke="#445"/><path d="M2 11q4 4 6-1 3-2 6 1" fill="none" stroke="#182c90" stroke-width="1.500"/>`,
            stack: `<path d="M1 4l4-3h10l-3 4H1z" fill="#8cc0f8" stroke="#5888d0" stroke-width=".7"/><path d="M3 6l9-1 3-3v4l-3 3-9 1z" fill="#f8d840"/><path d="M4 10l8-1 3-3v6l-5 4z" fill="#f07c28"/><path d="M4 8h9" stroke="#48b060" stroke-width="1.500"/>`,
            patch: `<path d="M1 3l6-2v7l-6 2z" fill="#6c9cf0" stroke="#4060b0" stroke-width=".7"/><path d="M6 9l4-2V5h5v8l-8 2z" fill="url(#gold)" stroke="#b08428" stroke-width=".7"/><path d="M2 10q0 4 4 4" fill="none" stroke="#4060b0" stroke-width="1.500"/>`,
            fold: `<path d="M5 3l3-2 7 5-4 4-2 5-8-2q4-4 4-10z" fill="#6c9ce8"/><path d="M5 3q0 6-4 10l4 1q4-4 4-9z" fill="#b8d4fa"/><path d="M7 1q3 3 7 4l-3 4" fill="none" stroke="#d87888" stroke-width="1.500"/>`,
            boot: `<path d="M9 1h6v13h-6l-8-1q1-4 6-5z" fill="url(#gold)" stroke="#d88c20" stroke-width=".8"/><path d="M11 1h4v13h-5z" fill="#f4a030"/>`,
            lockGray: `<path d="M1 6h4v8H1zM5 8h5v7H5z" fill="#999"/><path d="M5 0v8M1 4h8" stroke="#888"/><circle cx="12" cy="5" r="3" fill="none" stroke="#929292" stroke-width="2"/><circle cx="12" cy="11" r="2.500" fill="none" stroke="#929292" stroke-width="2"/>`,
            filter: `<path d="M.5.500h15v15H.5z" fill="none" stroke="#c84040"/><path d="M6 1v12M1 6h11" stroke="#444"/><circle cx="6" cy="6" r="2.500" fill="none" stroke="#444"/><path d="M6 7h10l-3.500 4v3l-2 1v-4z" fill="#f8cc30" stroke="#c89018" stroke-width=".6"/>`,
            back: `<path d="M12 4q6 7-5 8v2L2 10l5-4v2q6 0 5-4z" fill="#1f9c98" stroke="#10706c" stroke-width=".6"/>`,
            roof: `<path d="M1 8l5-5 4-1 5 5v5l-6 2-2-4-3 3-3-1z" fill="#f4f4f6" stroke="#333"/><path d="M10 7l-1 7" stroke="#333"/><path d="M5 5l5 3" fill="none" stroke="#c03838" stroke-width="1.500"/><path d="M10 8l5-1v5l-5 2z" fill="#9cb0e4" stroke="#333" stroke-width=".7"/>`,
            snapGray: `<path d="M1 4q6-5 8 2" fill="none" stroke="#888" stroke-width="2"/><path d="M0 2l1 5 4-2zM11 5v11M6 10h10" fill="#888" stroke="#888"/><circle cx="11" cy="10" r="3" fill="none" stroke="#888"/>`,
            hookGray: `<path d="M1 2h5l2 1q6 0 6 6v1h-4q0-4-4-4l-3 1-2-1z" fill="#8f8f8f"/><path d="M10 10h5v5h-5z" fill="#a8a8a8"/>`,
            rect: `<path d="M1.500 2.500h13v11h-13z" fill="none" stroke="#111" stroke-width="1.300" stroke-dasharray="3 1.500"/><path d="M0 1h3v3H0zM13 12h3v3h-3z" fill="#d02828"/>`,
            cubeWire: `<path d="M8 .5l7 3v8.500l-7 3.500L1 12V3.500z" fill="#6cacf4"/><path d="M8 7l7-3.500V12l-7 3.500z" fill="#3c5cd8"/><path d="M1 3.500l7-3 7 3L8 7z" fill="#c4e0fc"/><path d="M8 .5V7L1 3.500M8 7l7-3.500" fill="none" stroke="#c86c88"/>`,
            // resource bar
            assembly: `<path d="M1 1h4v4H1zM3 5h4v3H3z" fill="#f0f040" stroke="#8c8c10"/><path d="M3 9v6M3 11h4M7 8h9M12 13h4" fill="none" stroke="#555a90" stroke-width="1.200"/><path d="M7 10h4v4H7z" fill="#f0f040" stroke="#8c8c10"/>`,
            constraint: `<path d="M1 2l2-1h3v6l-2 1H1z" fill="#f4b4b4" stroke="#b04848"/><path d="M3 9v6M3 12h4M6 8h10M12 13h4" stroke="#555a90" stroke-width="1.200"/><circle cx="9" cy="12.500" r="2.500" fill="#fff" stroke="#b04848" stroke-dasharray="1 1"/>`,
            parts: `<path d="M2 1h4v10h1v4H1v-4h1z" fill="#84a8f0" stroke="#4868c0"/><path d="M9 2h5l2 2v9l-2 2H9v-3h3V9H9V6h3V5H9z" fill="#f8cc38" stroke="#a87c10"/>`,
            infoWeb: `<circle cx="6" cy="10" r="5.500" fill="#1c7cc8"/><path d="M6 6.500v1.500M5 9.500h1.500V13M4.500 13h4" stroke="#fff" stroke-width="1.500" fill="none"/><path d="M8 4q4 1 4 5M8 1q7 1 7 8" fill="none" stroke="#5470a8" stroke-width="1.500"/>`,
            web: `<path d="M2.500.500h9l3 3v12h-12z" fill="#fff4b0" stroke="#a89c60"/><circle cx="8" cy="8" r="4" fill="#2c78d0"/><path d="M6 6q3-2 4 1l-2 3z" fill="#68c058"/>`,
            clock: `<circle cx="8" cy="8" r="7" fill="#e6f0f4" stroke="#465866" stroke-width="1.400"/><circle cx="8" cy="8" r="5" fill="none" stroke="#8ca0b0" stroke-dasharray="1 1.600"/><path d="M8 3.500V8.500h4" fill="none" stroke="#112" stroke-width="1.500"/>`,
            roles: `<path d="M1 3h4v10H1zM3 2h4v12H3z" fill="#fff" stroke="#99a"/><path d="M6 1.500h9.500v12H6z" fill="#f8f8ff" stroke="#778"/><path d="M8 4h2v2H8z" fill="#3a6ad0"/><path d="M8 7h2v2H8z" fill="#2ca048"/><path d="M8 10h2v2H8z" fill="#c82828"/><path d="M11 5h3M11 8h3M11 11h3" stroke="#556"/>`,
            spectrum: `<path d="M1 0h6v16H1z" fill="url(#rainbow)"/><path d="M10 5l5 10" stroke="#3840a8" stroke-width="2.500"/><path d="M8 4l3-3 3 2-3 4z" fill="#f4ec80"/>`,
            wizard: `<path d="M2 4v9l3-1V9l8 2V6L5 8V4z" fill="#4c50b0" stroke="#23265c"/><path d="M8 5l6 9" stroke="#23265c" stroke-width="2"/><path d="M7 1l2 2 4-1-2 4-3-1z" fill="#f0ec80"/>`,
            people: `<circle cx="11" cy="4" r="3" fill="#e09c50"/><path d="M7 12q0-5 4-5t5 5z" fill="#3c9c48"/><circle cx="5" cy="8" r="3" fill="#f0c8a0" stroke="#7c3c1c"/><path d="M1 16q0-5 4-5t5 5z" fill="#8050c0"/>`,
            photo: `<path d="M.5 2.500h15v11H.5z" fill="#2c68b8" stroke="#223c68"/><path d="M1 11q2-4 5-2 3-2 5 0 3-1 4 2v2H1z" fill="#e8ecf8"/><circle cx="12" cy="5" r="1.700" fill="#f8e430"/>`
        };

        // --- Toolbar rows: '|' separator, 'v' drop-down arrow, a number is a gap before the next strip ---
        const rows = [
            [
                'START new open save | cut copy paste | undo redo | info | find', 20,
                'fit fitGray zoomBox zoom rotate pan persp | cube v yin section sectionGray v layer v white v | wcs1 wcs2 wcs3', 0,
                '*csys csys2 palette arrowDia diamonds pick diamonds2 | ruler angle', 6,
                'gear1 gear2 gear3 gear4 gear5'
            ],
            [
                'sketch | extrude revolve sweep | hole | datum pattern', 0,
                'unite v plane v | block sphere | blend chamfer chamfer trim shell tube boss pad | join sheet | grid', 0,
                'line arc | offset spline v project v', 0,
                'surf surf mesh through nsurf | wave stack patch | fold boot'
            ]
        ];

        const art = (name) => `<svg class="w-4 h-4" viewBox="0 0 16 16">${icons[name]}</svg>`;

        function item(token) {
            if (token === '|') return `<span class="w-[2px] h-[23px] mx-[2px] border-l border-[#b4b4b4] bg-[#f4f4f4]"></span>`;
            if (token === 'v') return `<button aria-label="展开" class="w-3 grid place-items-center"><svg class="w-[5px] h-[3px]" viewBox="0 0 5 3"><path d="M0 0h5L2.500 3z"/></svg></button>`;
            if (token === 'n') return `<button aria-label="展开" class="w-2 grid place-items-center"><svg class="w-[5px] h-[3px]" viewBox="0 0 5 3"><path d="M0 0h5L2.500 3z"/></svg></button>`;
            if (token === 'START') return `<button class="flex items-center pl-[3px] pr-[5px] h-[23px] whitespace-nowrap"><svg class="w-4 h-4"><use href="#nx"/></svg><span class="ml-1 mr-[3px]">开始</span><svg class="w-[5px] h-[3px]" viewBox="0 0 5 3"><path d="M0 0h5L2.500 3z"/></svg></button>`;
            if (token[0] === '*') return `<button aria-label="${token.slice(1)}" class="w-[23px] h-[22px] grid place-items-center bg-white border border-[#555] rounded-[3px]">${art(token.slice(1))}</button>`;
            return `<button aria-label="${token}" class="w-[23px] h-[23px] grid place-items-center">${art(token)}</button>`;
        }

        const strip = (tokens) => `
            <div class="flex items-center border-r border-b border-r-[#b8b8b8] border-b-[#b8b8b8] shadow-[inset_1px_1px_#ededed]">
                <span class="ml-1 mr-px h-[18px] border-l-2 border-dotted border-[#a0a0a0]"></span>
                ${tokens.split(' ').map(item).join('')}
                <button aria-label="更多" class="w-[14px] pt-3 grid place-items-center"><svg class="w-[5px] h-[3px]" viewBox="0 0 5 3"><path d="M0 0h5L2.500 3z"/></svg></button>
            </div>`;

        document.getElementById('toolbars').innerHTML = rows.map((row) =>
            `<div class="h-[27px] last:h-[26px] flex">${row.map((part) => typeof part === 'number' ? `<span style="width:${part}px"></span>` : strip(part)).join('')}</div>`
        ).join('');

        document.getElementById('selection-tools').innerHTML =
            'lockGray | filter n back roof snapGray hookGray | rect v | cubeWire'.split(' ').map(item).join('');

        document.getElementById('menu').innerHTML =
            [['文件', 'F'], ['编辑', 'E'], ['视图', 'V'], ['插入', 'S'], ['格式', 'R'], ['工具', 'T'], ['装配', 'A'], ['信息', 'I'], ['分析', 'L'], ['首选项', 'P'], ['窗口', 'O'], ['帮助', 'H']]
                .map(([label, key]) => `<button class="whitespace-nowrap">${label}(<span class="underline">${key}</span>)</button>`).join('');

        // --- Resource bar tabs, grouped with wider gaps ---
        const tab = (name) => `<button aria-label="${name}" class="w-[22px] h-8 pl-[2px] flex items-center rounded-l-[4px] border border-r-0 border-[#777] bg-linear-to-r from-[#ececec] to-[#cfcfcf] shadow-[0_1px_#666]">${art(name)}</button>`;
        document.getElementById('resources').innerHTML =
            [['assembly', 'constraint', 'parts'], ['infoWeb'], ['web'], ['clock', 'roles', 'spectrum', 'wizard', 'people', 'photo']]
                .map((group) => `<div class="flex flex-col gap-[2px] mb-3">${group.map(tab).join('')}</div>`).join('');

        // --- Thread profile: twelve teeth at a constant pitch ---
        const PITCH = 101.7;
        const TEETH = 12;
        let d = 'M54 322H60Q67 322 70 311L95 250';
        let grooves = '';
        for (let i = 0; i < TEETH; i++) {
            const x = i * PITCH;
            d += `L${117.5 + x} 250L${142 + x} 312Q${145 + x} 322 ${151 + x} 322H${160 + x}Q${167 + x} 322 ${171 + x} 311`;
            d += i < TEETH - 1 ? `L${196 + x} 250` : 'L1311 256';
            if (i < TEETH - 1) grooves += `<use href="#groove-top" x="${x}"/>`;
            grooves += `<use href="#groove-bottom" x="${x}"/>`;
        }
        d += 'L1346 290V608L1312 642';
        for (let i = TEETH - 1; i >= 0; i--) {
            const x = i * PITCH;
            d += `L${171 + x} 587Q${167 + x} 577 ${160 + x} 577H${151 + x}Q${145 + x} 577 ${142 + x} 587L${117.5 + x} 649H${95 + x}`;
        }
        d += 'L70 587Q67 577 60 577H54Z';
        document.getElementById('thread').setAttribute('d', d);
        document.getElementById('grooves').innerHTML = grooves;

        // --- Taskbar buttons, on a 32 x 32 grid ---
        const tasks = [
            ['资源管理器', true, false, `<path d="M1 5h10l2 3h16v18H1z" fill="#f0d98c" stroke="#b89848"/><path d="M6 6h12v4H6zM15 8h12v4H15z" fill="#fff"/><path d="M6 5h4v3H6z" fill="#2ca848"/><path d="M20 8h5v3h-5z" fill="#3a6ad8"/><path d="M1 11h30v16H1z" fill="#f9eeb8" stroke="#c8ac5c"/><path d="M6 19h21v10h-5v-5H11v5H6z" fill="#a4dcf4" stroke="#4ca4cc"/>`],
            ['浏览器', false, false, `<circle cx="16" cy="16" r="13" fill="#5cb82c" stroke="#e8f8e0" stroke-width="2"/><path d="M25 17H10q1 6 6 6 3 0 4-2h5q-2 6-9 6-10-1-10-11Q7 6 16 6q9 1 9 11zM11 14h10q-1-5-5-5t-5 5z" fill="#fff"/><path d="M4 30Q0 20 12 9 22 1 30 3 19 4 10 14 3 23 4 30z" fill="#7cd044" stroke="#3c9420" stroke-width=".6"/>`],
            ['Skype', false, false, `<path d="M8 1q4-1 7 1 15 0 15 15 3 5 0 9t-10 4Q4 31 3 15-1 5 8 1z" fill="#0ca4e4"/><path d="M22 10q-2-3-7-3-5 1-5 5t6 4.500 5 4-5 2.500q-4 0-6-3" fill="none" stroke="#fff" stroke-width="3.600"/>`],
            ['NX 7', false, true, `<use href="#nx"/>`],
            ['便笺', true, false, `<path d="M4 5h24v19l-5 6H4z" fill="#fbc93c" stroke="#d09818"/><path d="M22 30v-6h6z" fill="#fff0b0" stroke="#d09818"/><path d="M3 4q4-4 8-2l-2 4q-2 5-5 6-4-4-1-8z" fill="#c84030" stroke="#8c2418"/><path d="M3 8l8-5M9 9l5 5" stroke="#7c5c48"/>`],
            ['Word', true, false, `<path d="M8 1h16v25H2V8q0-5 6-7z" fill="#2850a8" stroke="#fff"/><path d="M11 4l20 2-2 25-20-3z" fill="#fff" stroke="#90a4c8"/><path d="M11 8l2 9 3-6 2 6 4-8" fill="none" stroke="#1c48a8" stroke-width="2.200"/><path d="M23 10h5M23 14h5M12 20l15 1M12 24l15 1" stroke="#1c3c88" stroke-width="2"/>`],
            ['控制面板', true, false, `<path d="M1 5h30v20H1z" fill="#2c90d8" stroke="#1c5c98"/><circle cx="9" cy="13" r="4.500" fill="none" stroke="#d4f0ff" stroke-width="1.500"/><path d="M9 8v5h5q0-4-5-5z" fill="#f4b030"/><path d="M18 10h4v2h-4zM23 10h5v2h-5zM18 17h4v2h-4zM23 17h5v2h-5z" fill="#1878c4" stroke="#b4e8ff"/><path d="M6 21h2M10 21h2" stroke="#f4b030" stroke-width="2"/><ellipse cx="16" cy="27" rx="6.500" ry="4" fill="#dcdcdc" stroke="#999"/>`],
            ['窗口', false, false, `<path d="M25 17l6 3-6 3z" fill="#777"/><path d="M7 5l17 5v16L7 21z" fill="#fff" stroke="#111"/><path d="M7 4l17 5v3L7 7z" fill="#48d8c8" stroke="#111"/>`]
        ];
        document.getElementById('tasks').innerHTML = tasks.map(([name, stacked, active, svg]) => `
            <div class="flex w-[59px] pt-px">
                <button aria-label="${name}" class="flex-1 grid place-items-center border shadow-[inset_0_0_0_1px_#9dbfe2] ${active ? 'border-[#2c5484] bg-linear-to-b from-[#8fabcf] to-[#a9c1de] ring-1 ring-inset ring-white' : 'border-[#3c6ca4] bg-[#739ccc]'}"><svg class="w-8 h-8" viewBox="0 0 32 32">${svg}</svg></button>
                ${stacked ? '<span class="w-1 border-y border-r border-[#3c6ca4] bg-[#8fb2da]"></span>' : ''}
            </div>`).join('');
    </script>

</body>
</html>
